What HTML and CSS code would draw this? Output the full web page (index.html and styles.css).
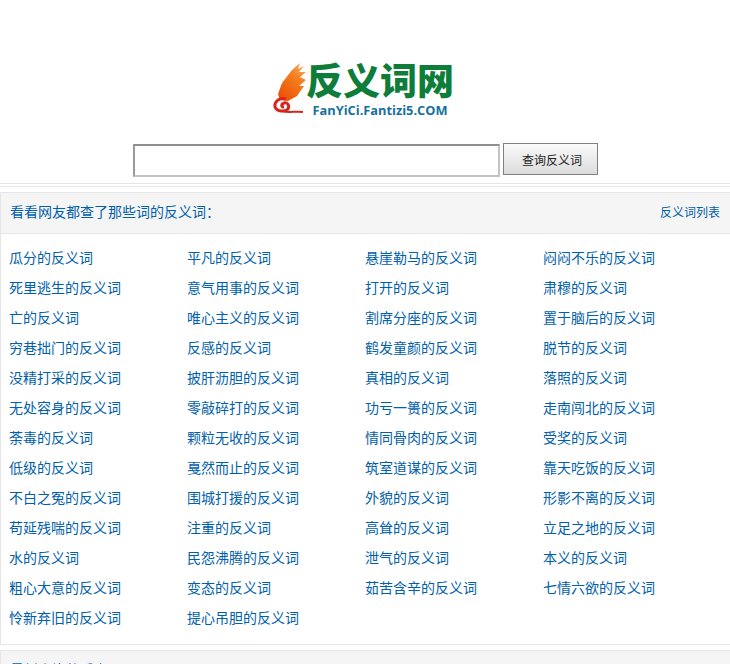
FILE: index.html
```html
<!DOCTYPE html>
<html lang="zh">
<head>
<meta charset="utf-8">
<title>反义词网</title>
<link rel="stylesheet" href="styles.css">
</head>
<body>
<header class="header">
  <a class="logo" href="#">
    <svg class="logo-mark" width="34" height="56" viewBox="0 0 34 56">
      <defs>
        <linearGradient id="wing" x1="0.800" y1="0" x2="0.200" y2="1">
          <stop offset="0" stop-color="#f9a763"/>
          <stop offset="0.350" stop-color="#f57f1e"/>
          <stop offset="1" stop-color="#ec4f08"/>
        </linearGradient>
      </defs>
      <path fill="url(#wing)" d="M28 1L20 8L10 21L6 32L8 38L16 39L25 34L32 24L27 24L34 18L28 15L34 10L27 10L32 4L26 7Z"/>
      <path fill="none" stroke="#d8261c" stroke-width="3" d="M14 37C7 35 2 40 3 45C5 50 13 50 16 47C18 43 15 40 12 41C9 42 9 45 12 45"/>
      <path fill="none" stroke="#d8261c" stroke-width="2" d="M10 49C16 51 24 49 31 50"/>
    </svg>
    <span class="logo-text">
      <span class="logo-title">反义词网</span>
      <span class="logo-sub">FanYiCi.Fantizi5.COM</span>
    </span>
  </a>
  <form class="search">
    <input class="search-input" type="text">
    <button class="search-button" type="button">查询反义词</button>
  </form>
</header>
<section class="panel">
  <div class="panel-head">
    <h2 class="panel-title">看看网友都查了那些词的反义词：</h2>
    <a class="panel-link" href="#">反义词列表</a>
  </div>
  <ul class="word-grid">
    <li><a href="#">瓜分的反义词</a></li>
    <li><a href="#">平凡的反义词</a></li>
    <li><a href="#">悬崖勒马的反义词</a></li>
    <li><a href="#">闷闷不乐的反义词</a></li>
    <li><a href="#">死里逃生的反义词</a></li>
    <li><a href="#">意气用事的反义词</a></li>
    <li><a href="#">打开的反义词</a></li>
    <li><a href="#">肃穆的反义词</a></li>
    <li><a href="#">亡的反义词</a></li>
    <li><a href="#">唯心主义的反义词</a></li>
    <li><a href="#">割席分座的反义词</a></li>
    <li><a href="#">置于脑后的反义词</a></li>
    <li><a href="#">穷巷拙门的反义词</a></li>
    <li><a href="#">反感的反义词</a></li>
    <li><a href="#">鹤发童颜的反义词</a></li>
    <li><a href="#">脱节的反义词</a></li>
    <li><a href="#">没精打采的反义词</a></li>
    <li><a href="#">披肝沥胆的反义词</a></li>
    <li><a href="#">真相的反义词</a></li>
    <li><a href="#">落照的反义词</a></li>
    <li><a href="#">无处容身的反义词</a></li>
    <li><a href="#">零敲碎打的反义词</a></li>
    <li><a href="#">功亏一篑的反义词</a></li>
    <li><a href="#">走南闯北的反义词</a></li>
    <li><a href="#">荼毒的反义词</a></li>
    <li><a href="#">颗粒无收的反义词</a></li>
    <li><a href="#">情同骨肉的反义词</a></li>
    <li><a href="#">受奖的反义词</a></li>
    <li><a href="#">低级的反义词</a></li>
    <li><a href="#">戛然而止的反义词</a></li>
    <li><a href="#">筑室道谋的反义词</a></li>
    <li><a href="#">靠天吃饭的反义词</a></li>
    <li><a href="#">不白之冤的反义词</a></li>
    <li><a href="#">围城打援的反义词</a></li>
    <li><a href="#">外貌的反义词</a></li>
    <li><a href="#">形影不离的反义词</a></li>
    <li><a href="#">苟延残喘的反义词</a></li>
    <li><a href="#">注重的反义词</a></li>
    <li><a href="#">高耸的反义词</a></li>
    <li><a href="#">立足之地的反义词</a></li>
    <li><a href="#">水的反义词</a></li>
    <li><a href="#">民怨沸腾的反义词</a></li>
    <li><a href="#">泄气的反义词</a></li>
    <li><a href="#">本义的反义词</a></li>
    <li><a href="#">粗心大意的反义词</a></li>
    <li><a href="#">变态的反义词</a></li>
    <li><a href="#">茹苦含辛的反义词</a></li>
    <li><a href="#">七情六欲的反义词</a></li>
    <li><a href="#">怜新弃旧的反义词</a></li>
    <li><a href="#">提心吊胆的反义词</a></li>
  </ul>
</section>
<section class="panel panel-next">
  <div class="panel-head">
    <h2 class="panel-title">最新查询的反义词</h2>
  </div>
</section>
</body>
</html>
```
FILE: styles.css
```css
html, body {
  margin: 0;
  padding: 0;
  height: 664px;
  overflow: hidden;
  background: #fff;
  font-family: "Noto Sans CJK SC", sans-serif;
  font-size: 14px;
}
a {
  color: #0060aa;
  text-decoration: none;
}
.header {
  height: 183px;
  border-bottom: 1px solid #e6e6e6;
  display: flex;
  flex-direction: column;
  align-items: center;
  position: relative;
}
.header::after {
  content: "";
  position: absolute;
  left: 0;
  right: 0;
  bottom: -4px;
  height: 1px;
  background: #e6e6e6;
}
.logo {
  display: flex;
  align-items: flex-start;
  margin-top: 58px;
  height: 61px;
  margin-left: -4px;
}
.logo-mark {
  display: block;
  margin-top: 4px;
}
.logo-text {
  display: flex;
  flex-direction: column;
  align-items: center;
}
.logo-title {
  font-size: 37px;
  line-height: 43px;
  font-weight: 900;
  color: #0e7d3a;
  white-space: nowrap;
}
.logo-sub {
  font-size: 12.800px;
  line-height: 18px;
  font-weight: 700;
  color: #17709c;
  font-family: "Open Sans", sans-serif;
  white-space: nowrap;
}
.search {
  display: flex;
  align-items: flex-start;
  margin-top: 24px;
  margin-left: 1px;
}
.search-input {
  box-sizing: border-box;
  width: 367px;
  height: 33px;
  margin: 1px 3px 0 0;
  padding: 0;
  background: #fff;
  border: 2px solid #c4c4c4;
  border-top-color: #8e8e8e;
  border-left-color: #9a9a9a;
  border-radius: 0;
}
.search-button {
  box-sizing: border-box;
  width: 95px;
  height: 32px;
  padding: 1px 0 0 3px;
  border: 1px solid #808080;
  background: linear-gradient(#fafafa, #dcdcdc);
  color: #222;
  font: 12px "Noto Sans CJK SC", sans-serif;
}
.panel {
  margin-top: 8px;
  border: 1px solid #e6e6e6;
  border-width: 1px 0 1px 1px;
}
.panel-head {
  box-sizing: border-box;
  display: flex;
  justify-content: space-between;
  align-items: center;
  height: 41px;
  padding: 0 10px 4px 9px;
  background: #f5f5f5;
  border-bottom: 1px solid #e6e6e6;
}
.panel-title {
  margin: 0;
  font-size: 14px;
  font-weight: 400;
  color: #0060aa;
}
.panel-link {
  font-size: 12px;
}
.word-grid {
  list-style: none;
  margin: 0;
  padding: 8px 0 12px 8px;
  display: grid;
  grid-template-columns: repeat(4, 178px);
  grid-auto-rows: 30px;
  align-items: center;
}
.word-grid a {
  line-height: 30px;
  white-space: nowrap;
}
.panel-next {
  margin-top: 5px;
}
```
